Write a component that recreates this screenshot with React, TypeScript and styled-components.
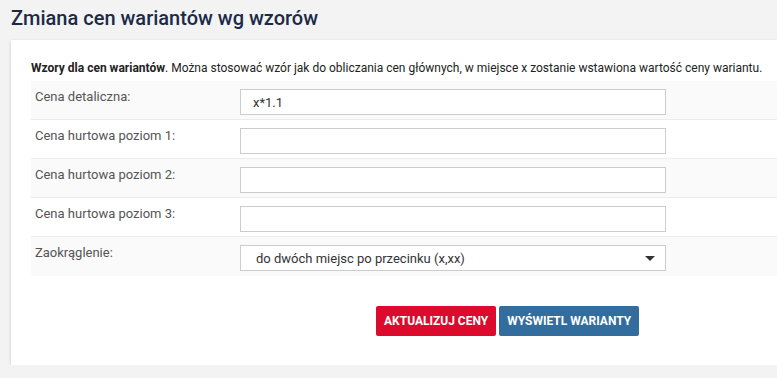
import React, { useState } from 'react';
import styled, { createGlobalStyle, css } from 'styled-components';

const GlobalStyle = createGlobalStyle`
  html, body {
    margin: 0;
    padding: 0;
    background: #f3f3f3;
    font-family: Roboto, "Liberation Sans", Arial, sans-serif;
    overflow: hidden;
  }
`;

const SCPage = styled.div`
  padding: 6px 0 0 11px;
`;

const SCTitle = styled.h1`
  margin: 0 0 10px;
  font-size: 20px;
  font-weight: 500;
  line-height: 24px;
  color: #1b2a47;
`;

const SCCard = styled.div`
  background: #fff;
  box-shadow: 0 1px 3px rgba(0, 0, 0, 0.18);
  padding: 19px 0 29px 20px;
  margin-right: -20px;
`;

const SCIntro = styled.p`
  margin: 0 0 4px;
  font-size: 12px;
  line-height: 18px;
  color: #222;
  white-space: nowrap;

  b {
    font-weight: 700;
  }
`;

const SCRow = styled.div<{ striped: boolean; last?: boolean }>`
  display: flex;
  align-items: flex-start;
  padding: 8px 0 4px 4px;
  border-bottom: 1px solid #ececec;
  ${({ striped }) => striped && css`
    background: #fafafa;
  `}
  ${({ last }) => last && css`
    border-bottom: none;
    padding-bottom: 5px;
  `}
`;

const SCLabel = styled.label`
  width: 205px;
  flex: none;
  font-size: 13px;
  line-height: 16px;
  color: #555;
`;

const SCInput = styled.input`
  box-sizing: border-box;
  width: 426px;
  height: 26px;
  margin: 0;
  padding: 0 12px;
  border: 1px solid #ccc;
  background: #fff;
  font-family: inherit;
  font-size: 13px;
  color: #333;
  outline: none;
`;

const SCSelect = styled.div`
  box-sizing: border-box;
  width: 426px;
  height: 26px;
  padding: 0 15px;
  border: 1px solid #ccc;
  background: #fff;
  display: flex;
  align-items: center;
  justify-content: space-between;
  font-size: 13px;
  color: #333;
`;

const SCCaret = styled.span`
  width: 0;
  height: 0;
  margin-right: -5px;
  border-left: 5px solid transparent;
  border-right: 5px solid transparent;
  border-top: 5px solid #333;
`;

const SCButtons = styled.div`
  display: flex;
  gap: 3px;
  margin: 30px 0 0 345px;
`;

const SCButton = styled.button<{ backgroundColor: string }>`
  height: 30px;
  padding: 0 8px;
  border: none;
  border-radius: 2px;
  font-family: inherit;
  font-size: 12px;
  font-weight: 700;
  color: #fff;
  cursor: pointer;
  ${({ backgroundColor }) => css`
    background: ${backgroundColor};
  `}
`;

const fields = [
  { label: 'Cena detaliczna:', value: 'x*1.1' },
  { label: 'Cena hurtowa poziom 1:', value: '' },
  { label: 'Cena hurtowa poziom 2:', value: '' },
  { label: 'Cena hurtowa poziom 3:', value: '' },
];

const App = () => {
  const [values, setValues] = useState(fields.map((f) => f.value));

  const onChange = (idx: number) => (e: React.ChangeEvent<HTMLInputElement>) => {
    const next = [...values];
    next[idx] = e.target.value;
    setValues(next);
  };

  return (
    <SCPage>
      <GlobalStyle />
      <SCTitle>Zmiana cen wariantów wg wzorów</SCTitle>
      <SCCard>
        <SCIntro>
          <b>Wzory dla cen wariantów</b>. Można stosować wzór jak do obliczania cen głównych, w miejsce x zostanie wstawiona wartość ceny wariantu.
        </SCIntro>
        {fields.map((f, idx) => (
          <SCRow key={f.label} striped={idx % 2 === 0}>
            <SCLabel>{f.label}</SCLabel>
            <SCInput value={values[idx]} onChange={onChange(idx)} />
          </SCRow>
        ))}
        <SCRow striped last>
          <SCLabel>Zaokrąglenie:</SCLabel>
          <SCSelect>
            <span>do dwóch miejsc po przecinku (x,xx)</span>
            <SCCaret />
          </SCSelect>
        </SCRow>
        <SCButtons>
          <SCButton backgroundColor="#dc0a2d">AKTUALIZUJ CENY</SCButton>
          <SCButton backgroundColor="#336d9e">WYŚWIETL WARIANTY</SCButton>
        </SCButtons>
      </SCCard>
    </SCPage>
  );
};

export default App;
